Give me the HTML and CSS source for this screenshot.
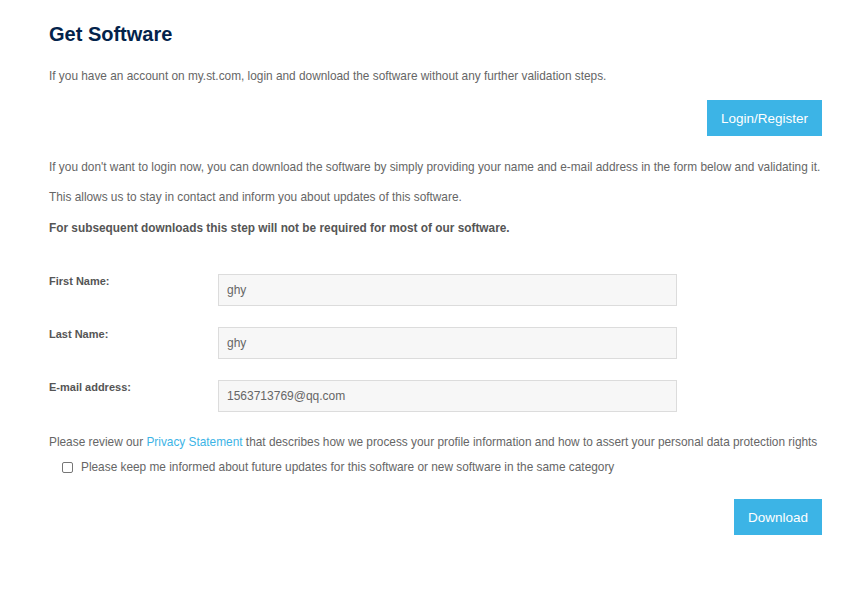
FILE: index.html
```html
<!DOCTYPE html>
<html lang="en">
<head>
<meta charset="utf-8">
<title>Get Software</title>
<link rel="stylesheet" href="styles.css">
</head>
<body>
<main class="page">
  <h1 class="title">Get Software</h1>
  <p class="text intro">If you have an account on my.st.com, login and download the software without any further validation steps.</p>
  <div class="actions">
    <button class="btn" type="button">Login/Register</button>
  </div>
  <p class="text para-first nowrap">If you don't want to login now, you can download the software by simply providing your name and e-mail address in the form below and validating it.</p>
  <p class="text">This allows us to stay in contact and inform you about updates of this software.</p>
  <p class="text strong">For subsequent downloads this step will not be required for most of our software.</p>

  <form class="form">
    <div class="row">
      <label class="label" for="fn">First Name:</label>
      <input class="field" id="fn" type="text" value="ghy">
    </div>
    <div class="row">
      <label class="label" for="ln">Last Name:</label>
      <input class="field" id="ln" type="text" value="ghy">
    </div>
    <div class="row">
      <label class="label" for="em">E-mail address:</label>
      <input class="field" id="em" type="text" value="1563713769@qq.com">
    </div>
  </form>

  <p class="text privacy nowrap">Please review our <a class="link" href="#">Privacy Statement</a> that describes how we process your profile information and how to assert your personal data protection rights</p>
  <label class="check">
    <input class="box" type="checkbox">
    <span>Please keep me informed about future updates for this software or new software in the same category</span>
  </label>
  <div class="actions bottom">
    <button class="btn" type="button">Download</button>
  </div>
</main>
</body>
</html>
```

FILE: styles.css
```css
* { box-sizing: border-box; }

html, body {
  margin: 0;
  padding: 0;
  background: #ffffff;
}

body {
  font-family: "Liberation Sans", Arial, sans-serif;
  color: #666666;
}

.page {
  width: 822px;
  padding: 22px 0 0 49px;
}

.title {
  margin: 0;
  font-size: 20px;
  line-height: 24px;
  font-weight: bold;
  color: #03234b;
}

.text {
  margin: 0 0 12px 0;
  font-size: 11.85px;
  line-height: 18px;
  color: #666666;
}

.nowrap {
  white-space: nowrap;
}

.intro {
  margin-top: 21px;
  margin-bottom: 15px;
}

.actions {
  display: flex;
  justify-content: flex-end;
}

.btn {
  height: 36px;
  padding: 0 14px;
  border: 0;
  border-radius: 0;
  background: #3cb4e6;
  color: #ffffff;
  font-family: "Liberation Sans", Arial, sans-serif;
  font-size: 13.5px;
  cursor: pointer;
}

.para-first {
  margin-top: 22px;
}

.strong {
  font-weight: bold;
  color: #555555;
  margin-top: 13px;
  margin-bottom: 0;
}

.form {
  margin-top: 37px;
  display: flex;
  flex-direction: column;
  gap: 21px;
}

.row {
  display: flex;
  align-items: flex-start;
}

.label {
  width: 169px;
  padding-top: 0;
  font-size: 11px;
  line-height: 14px;
  font-weight: bold;
  color: #555555;
}

.field {
  width: 459px;
  height: 32px;
  margin: 0;
  padding: 0 8px;
  border: 1px solid #dcdcdc;
  background: #f7f7f7;
  font-family: "Liberation Sans", Arial, sans-serif;
  font-size: 12px;
  color: #666666;
  outline: none;
}

.privacy {
  margin-top: 21px;
  margin-bottom: 7px;
}

.link {
  color: #3cb4e6;
  text-decoration: none;
}

.check {
  display: flex;
  align-items: center;
  gap: 8px;
  margin-left: 13px;
  font-size: 11.85px;
  line-height: 18px;
  color: #666666;
}

.box {
  appearance: none;
  -webkit-appearance: none;
  width: 11px;
  height: 11px;
  margin: 0;
  border: 1px solid #767676;
  border-radius: 2px;
  background: #ffffff;
}

.bottom {
  margin-top: 23px;
}
```
